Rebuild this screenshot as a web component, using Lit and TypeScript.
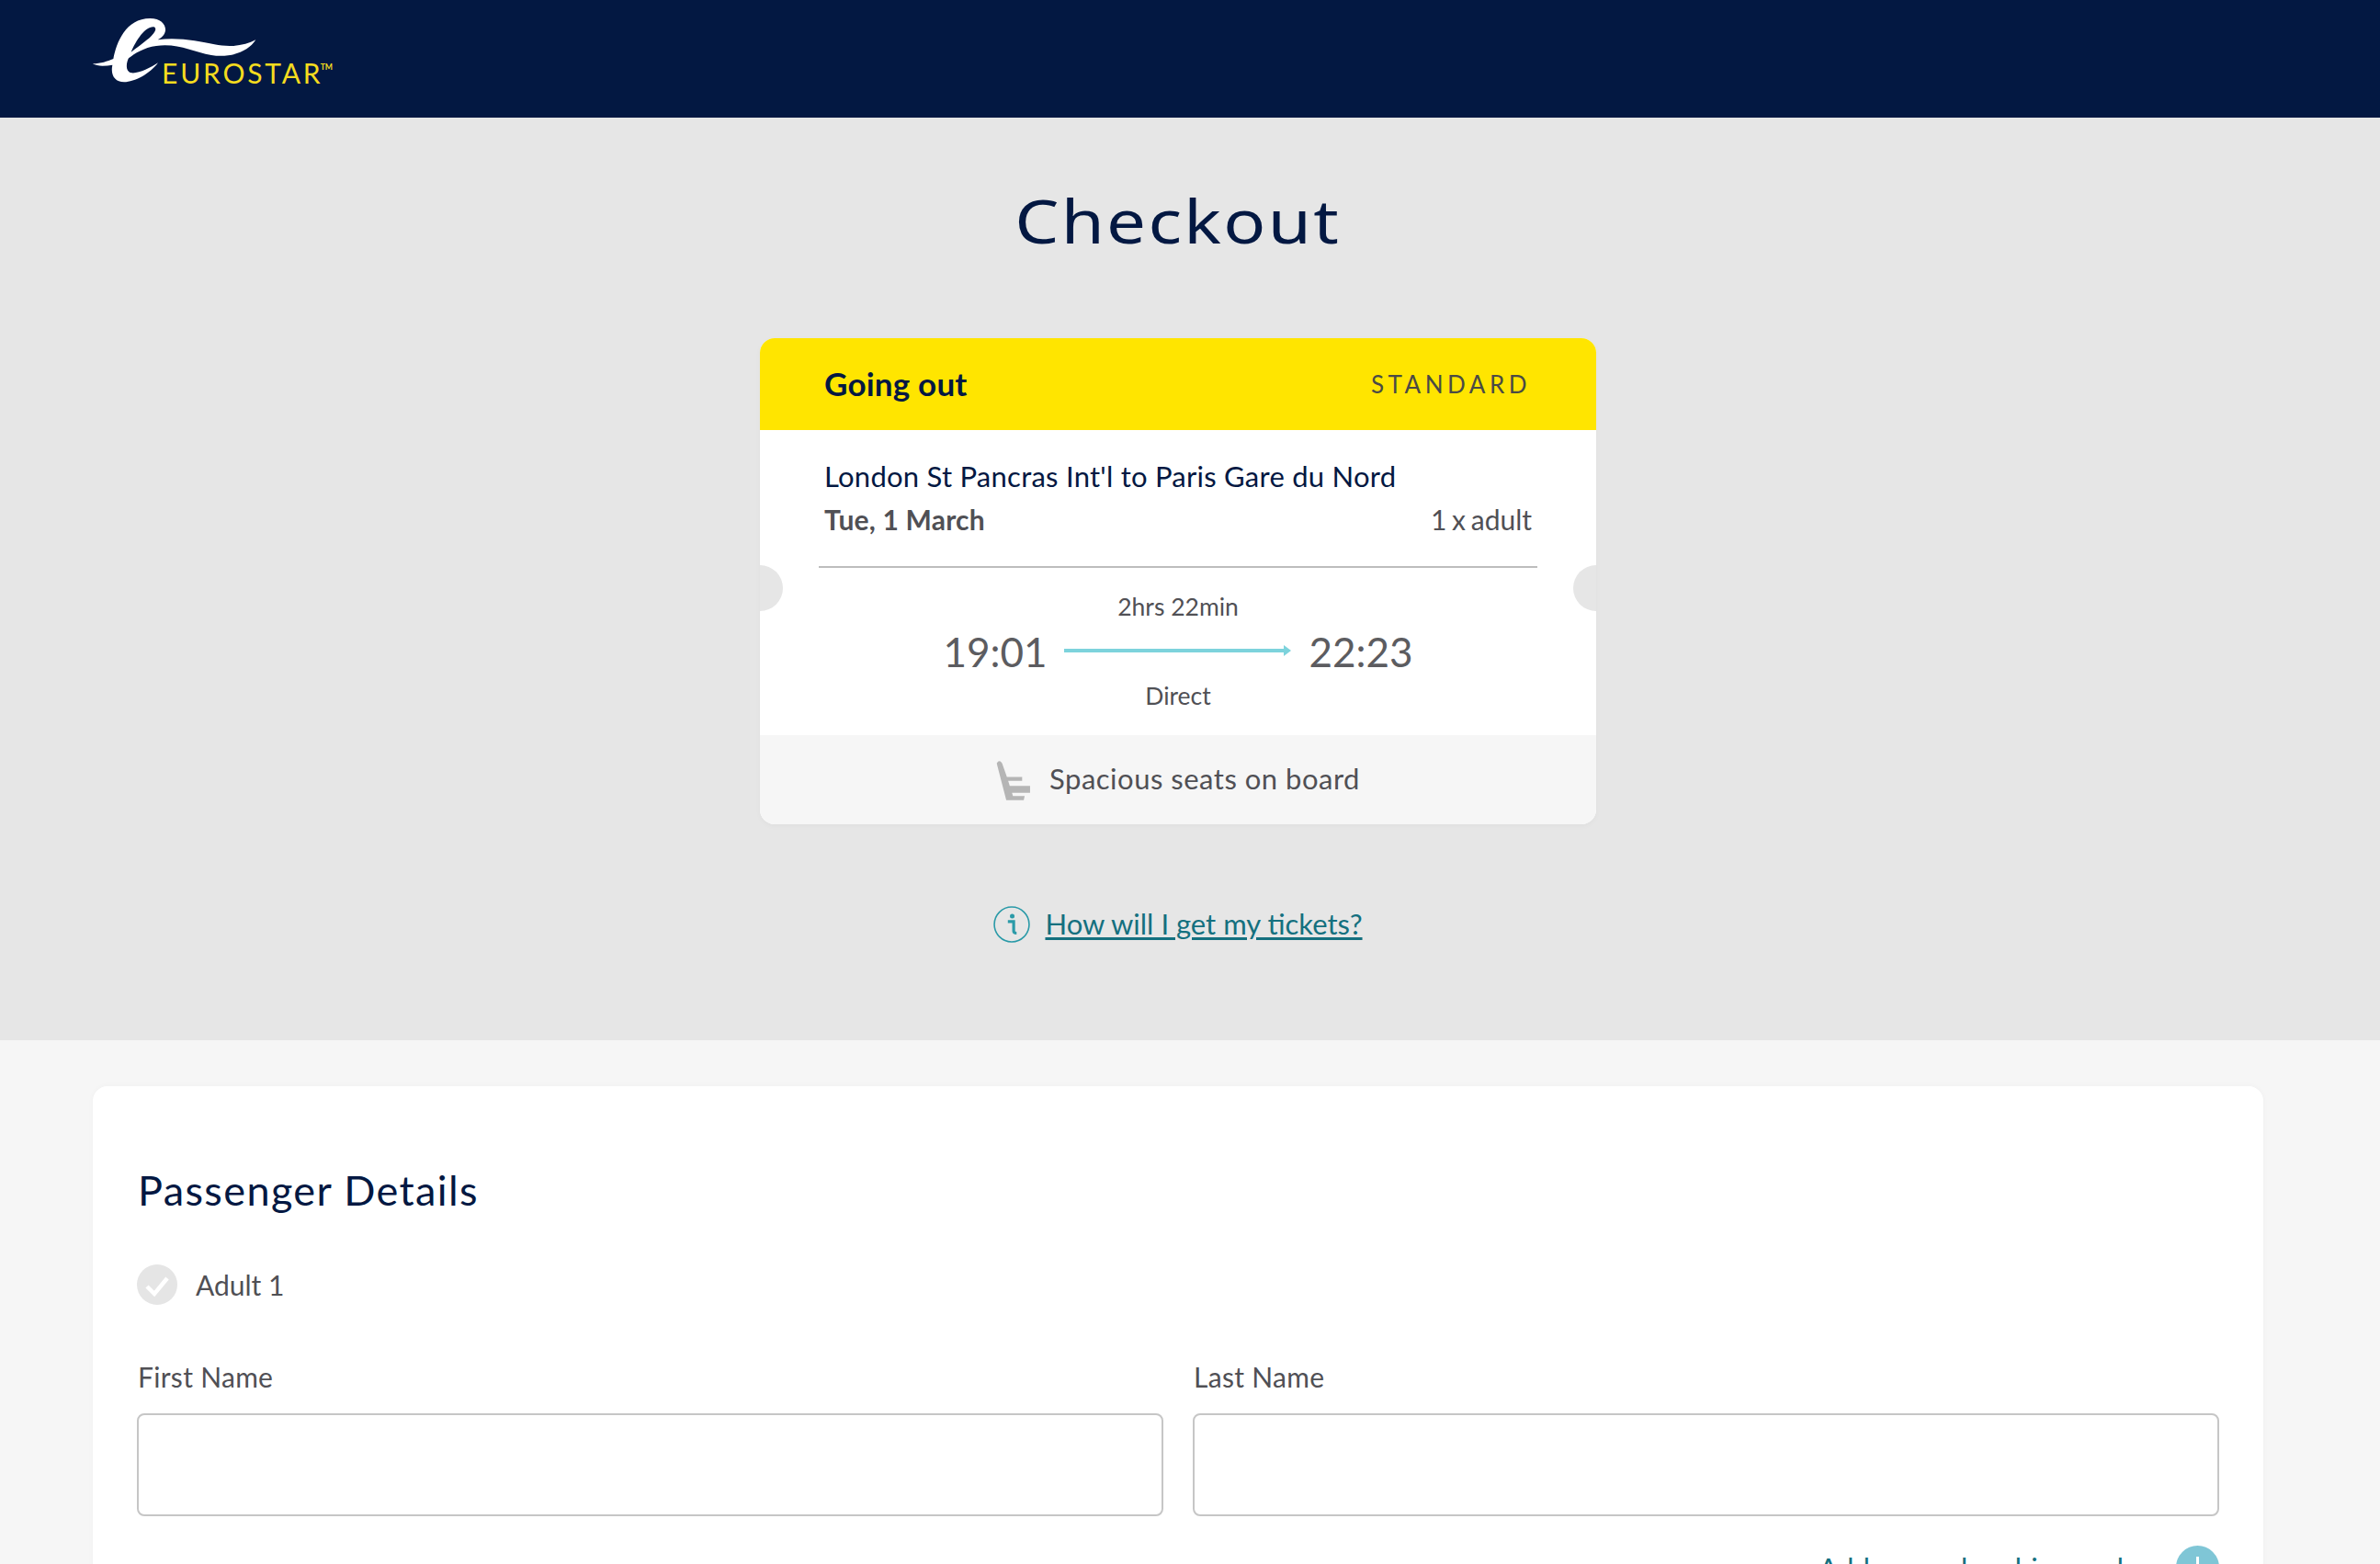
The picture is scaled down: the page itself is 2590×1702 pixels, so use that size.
import { LitElement, css, html } from 'lit';
import { customElement } from 'lit/decorators.js';

@customElement('app-root')
export class AppRoot extends LitElement {
  static styles = css`
    :host {
      display: block;
      height: 1702px;
      overflow: hidden;
      background: #f6f6f6;
      font-family: 'Lato', 'Liberation Sans', sans-serif;
      color: #505055;
      --navy: #031842;
      --teal: #14707f;
    }

    .topbar {
      height: 128px;
      background: var(--navy);
      padding-left: 60px;
    }

    .logo {
      display: block;
      width: 340px;
      height: 128px;
    }

    .hero {
      display: flex;
      flex-direction: column;
      align-items: center;
      background: #e6e6e6;
      padding: 71px 26px 107px 0;
    }

    h1 {
      margin: 0 0 89px;
      font-family: 'Noto Sans', sans-serif;
      font-weight: 400;
      font-size: 66px;
      line-height: 80px;
      letter-spacing: 2px;
      color: var(--navy);
      transform: scaleX(1.155);
    }

    .ticket {
      position: relative;
      width: 910px;
      border-radius: 16px;
      overflow: hidden;
      background: #fff;
      box-shadow: 0 2px 6px rgba(0, 0, 0, 0.03);
    }

    .notch {
      position: absolute;
      top: 247px;
      width: 50px;
      height: 50px;
      border-radius: 50%;
      background: #e6e6e6;
    }

    .notch.left { left: -25px; }
    .notch.right { right: -25px; }

    .ticket-head {
      display: flex;
      align-items: center;
      justify-content: space-between;
      height: 100px;
      padding: 0 71px 0 70px;
      background: #ffe500;
    }

    .going {
      padding-bottom: 2px;
      font-size: 35px;
      font-weight: 700;
      letter-spacing: 0.2px;
      color: var(--navy);
    }

    .fare {
      font-size: 26px;
      letter-spacing: 4.5px;
      color: #4a4a45;
    }

    .route {
      padding: 30px 70px 0 70px;
    }

    .route-name {
      font-size: 31px;
      line-height: 40px;
      letter-spacing: 0.25px;
      color: var(--navy);
    }

    .route-meta {
      display: flex;
      justify-content: space-between;
      margin-top: 7px;
      font-size: 30px;
      line-height: 40px;
    }

    .route-meta b {
      font-weight: 700;
      letter-spacing: 0.2px;
    }

    .route-meta span {
      word-spacing: -2px;
    }

    .rule {
      height: 2px;
      margin: 31px 64px 0;
      background: #bdbdbd;
    }

    .timing {
      display: flex;
      flex-direction: column;
      align-items: center;
      height: 182px;
      padding-top: 27px;
      box-sizing: border-box;
      font-size: 26.5px;
      line-height: 30px;
    }

    .times {
      display: flex;
      align-items: center;
      gap: 19px;
      height: 50px;
      margin: 9px 0 8px;
      font-size: 44px;
      font-weight: 400;
      color: #5c5c60;
    }

    .arrow {
      display: block;
      width: 247px;
      height: 12px;
      margin: 0 1px 2px -1px;
    }

    .perk {
      display: flex;
      align-items: center;
      justify-content: center;
      gap: 20px;
      height: 97px;
      background: #f6f6f6;
      font-size: 31px;
      letter-spacing: 0.5px;
    }

    .perk span {
      padding-bottom: 3px;
    }

    .seat {
      display: block;
      width: 38px;
      height: 46px;
    }

    .how {
      display: flex;
      align-items: center;
      gap: 16px;
      height: 40px;
      margin-top: 89px;
      margin-bottom: -1px;
      font-size: 31px;
      color: var(--teal);
    }

    .how a {
      padding-bottom: 2px;
      color: inherit;
      text-decoration: underline;
      text-decoration-thickness: 3px;
      text-underline-offset: 3px;
    }

    .info {
      display: block;
      width: 40px;
      height: 40px;
    }

    .panel {
      margin: 50px 127px 0 101px;
      padding: 83px 48px 0;
      min-height: 600px;
      border-radius: 16px;
      background: #fff;
      box-shadow: 0 0 6px rgba(0, 0, 0, 0.03);
    }

    h2 {
      margin: 0 0 51px 1px;
      font-weight: 400;
      font-size: 45px;
      line-height: 60px;
      letter-spacing: 1.4px;
      color: var(--navy);
    }

    .adult {
      display: flex;
      align-items: center;
      gap: 20px;
      height: 44px;
      font-size: 30px;
    }

    .tick {
      display: block;
      width: 44px;
      height: 44px;
    }

    .fields {
      display: grid;
      grid-template-columns: 1fr 1fr;
      gap: 32px;
      margin-top: 58px;
    }

    label {
      display: block;
      margin: 0 0 20px 1px;
      font-size: 30px;
      line-height: 40px;
      letter-spacing: 0.3px;
    }

    input {
      display: block;
      width: 100%;
      height: 112px;
      box-sizing: border-box;
      border: 2px solid #c6c6c6;
      border-radius: 8px;
      background: #fff;
    }

    .membership {
      display: flex;
      justify-content: flex-end;
      align-items: center;
      gap: 19px;
      margin-top: 32px;
      font-size: 31px;
      letter-spacing: 0.1px;
      color: var(--teal);
    }

    .plus {
      display: block;
      width: 47px;
      height: 47px;
    }
  `;

  private fields = ['First Name', 'Last Name'];

  render() {
    return html`
      <header class="topbar">
        <svg class="logo" viewBox="0 0 1020 384" role="img" aria-label="Eurostar">
          <path fill="#fff" fill-rule="evenodd" d="M122 208C150 208 170 200 190 192C200 140 230 60 310 60C345 60 362 80 360 100C358 115 345 125 335 130C400 120 470 135 520 145C570 155 620 150 655 130C630 170 570 190 510 180C450 170 400 140 330 150C290 155 260 175 240 190C232 205 228 235 250 238C275 240 310 222 336 205C310 240 260 268 225 268C195 268 180 245 187 212C165 215 140 218 122 208ZM248 170C265 130 295 85 322 88C335 92 325 110 300 130C285 142 265 158 248 170Z"></path>
          <text x="348" y="272" fill="#f5dc1e" font-family="Lato, sans-serif" font-size="90" textLength="518">EUROSTAR</text>
          <text x="866" y="228" fill="#f5dc1e" font-family="Lato, sans-serif" font-size="26" font-weight="700">TM</text>
        </svg>
      </header>

      <section class="hero">
        <h1>Checkout</h1>

        <div class="ticket">
          <div class="ticket-head">
            <span class="going">Going out</span>
            <span class="fare">STANDARD</span>
          </div>
          <div class="route">
            <div class="route-name">London St Pancras Int'l to Paris Gare du Nord</div>
            <div class="route-meta">
              <b>Tue, 1 March</b>
              <span>1 x adult</span>
            </div>
          </div>
          <div class="rule"></div>
          <div class="timing">
            <span>2hrs 22min</span>
            <div class="times">
              <span>19:01</span>
              <svg class="arrow" viewBox="0 0 247 12">
                <rect x="0" y="4" width="241" height="4" fill="#7dd3dc"></rect>
                <path d="M239 0L247 6L239 12Z" fill="#7dd3dc"></path>
              </svg>
              <span>22:23</span>
            </div>
            <span>Direct</span>
          </div>
          <div class="perk">
            <svg class="seat" viewBox="78 40 110 130">
              <path fill="#b5b5b5" d="M80 52Q88 38 97 52L112 95L160 95L160 107L116 107L121 123L185 123L185 145L128 145L131 155L168 155L165 168L110 168Z"></path>
            </svg>
            <span>Spacious seats on board</span>
          </div>
          <span class="notch left"></span>
          <span class="notch right"></span>
        </div>

        <div class="how">
          <svg class="info" viewBox="0 0 38 38">
            <circle cx="19" cy="19" r="18" fill="none" stroke="#2a9aa8" stroke-width="1.5"></circle>
            <circle cx="19.5" cy="10.5" r="2.4" fill="#2a9aa8"></circle>
            <path d="M15 16H21V26Q21 28 24 28" fill="none" stroke="#2a9aa8" stroke-width="3"></path>
          </svg>
          <a href="#">How will I get my tickets?</a>
        </div>
      </section>

      <section class="panel">
        <h2>Passenger Details</h2>
        <div class="adult">
          <svg class="tick" viewBox="0 0 44 44">
            <circle cx="22" cy="22" r="22" fill="#e5e5e5"></circle>
            <path d="M11 24L19 32L33 15" fill="none" stroke="#fff" stroke-width="4.5"></path>
          </svg>
          <span>Adult 1</span>
        </div>
        <div class="fields">
          ${this.fields.map(
            (name) => html`
              <div>
                <label>${name}</label>
                <input type="text" aria-label=${name} />
              </div>
            `
          )}
        </div>
        <div class="membership">
          <span>Add a membership number</span>
          <svg class="plus" viewBox="0 0 47 47">
            <circle cx="23.5" cy="23.5" r="23.5" fill="#7fc6d6"></circle>
            <path d="M23.5 12V35M12 23.5H35" stroke="#fff" stroke-width="3"></path>
          </svg>
        </div>
      </section>
    `;
  }
}
